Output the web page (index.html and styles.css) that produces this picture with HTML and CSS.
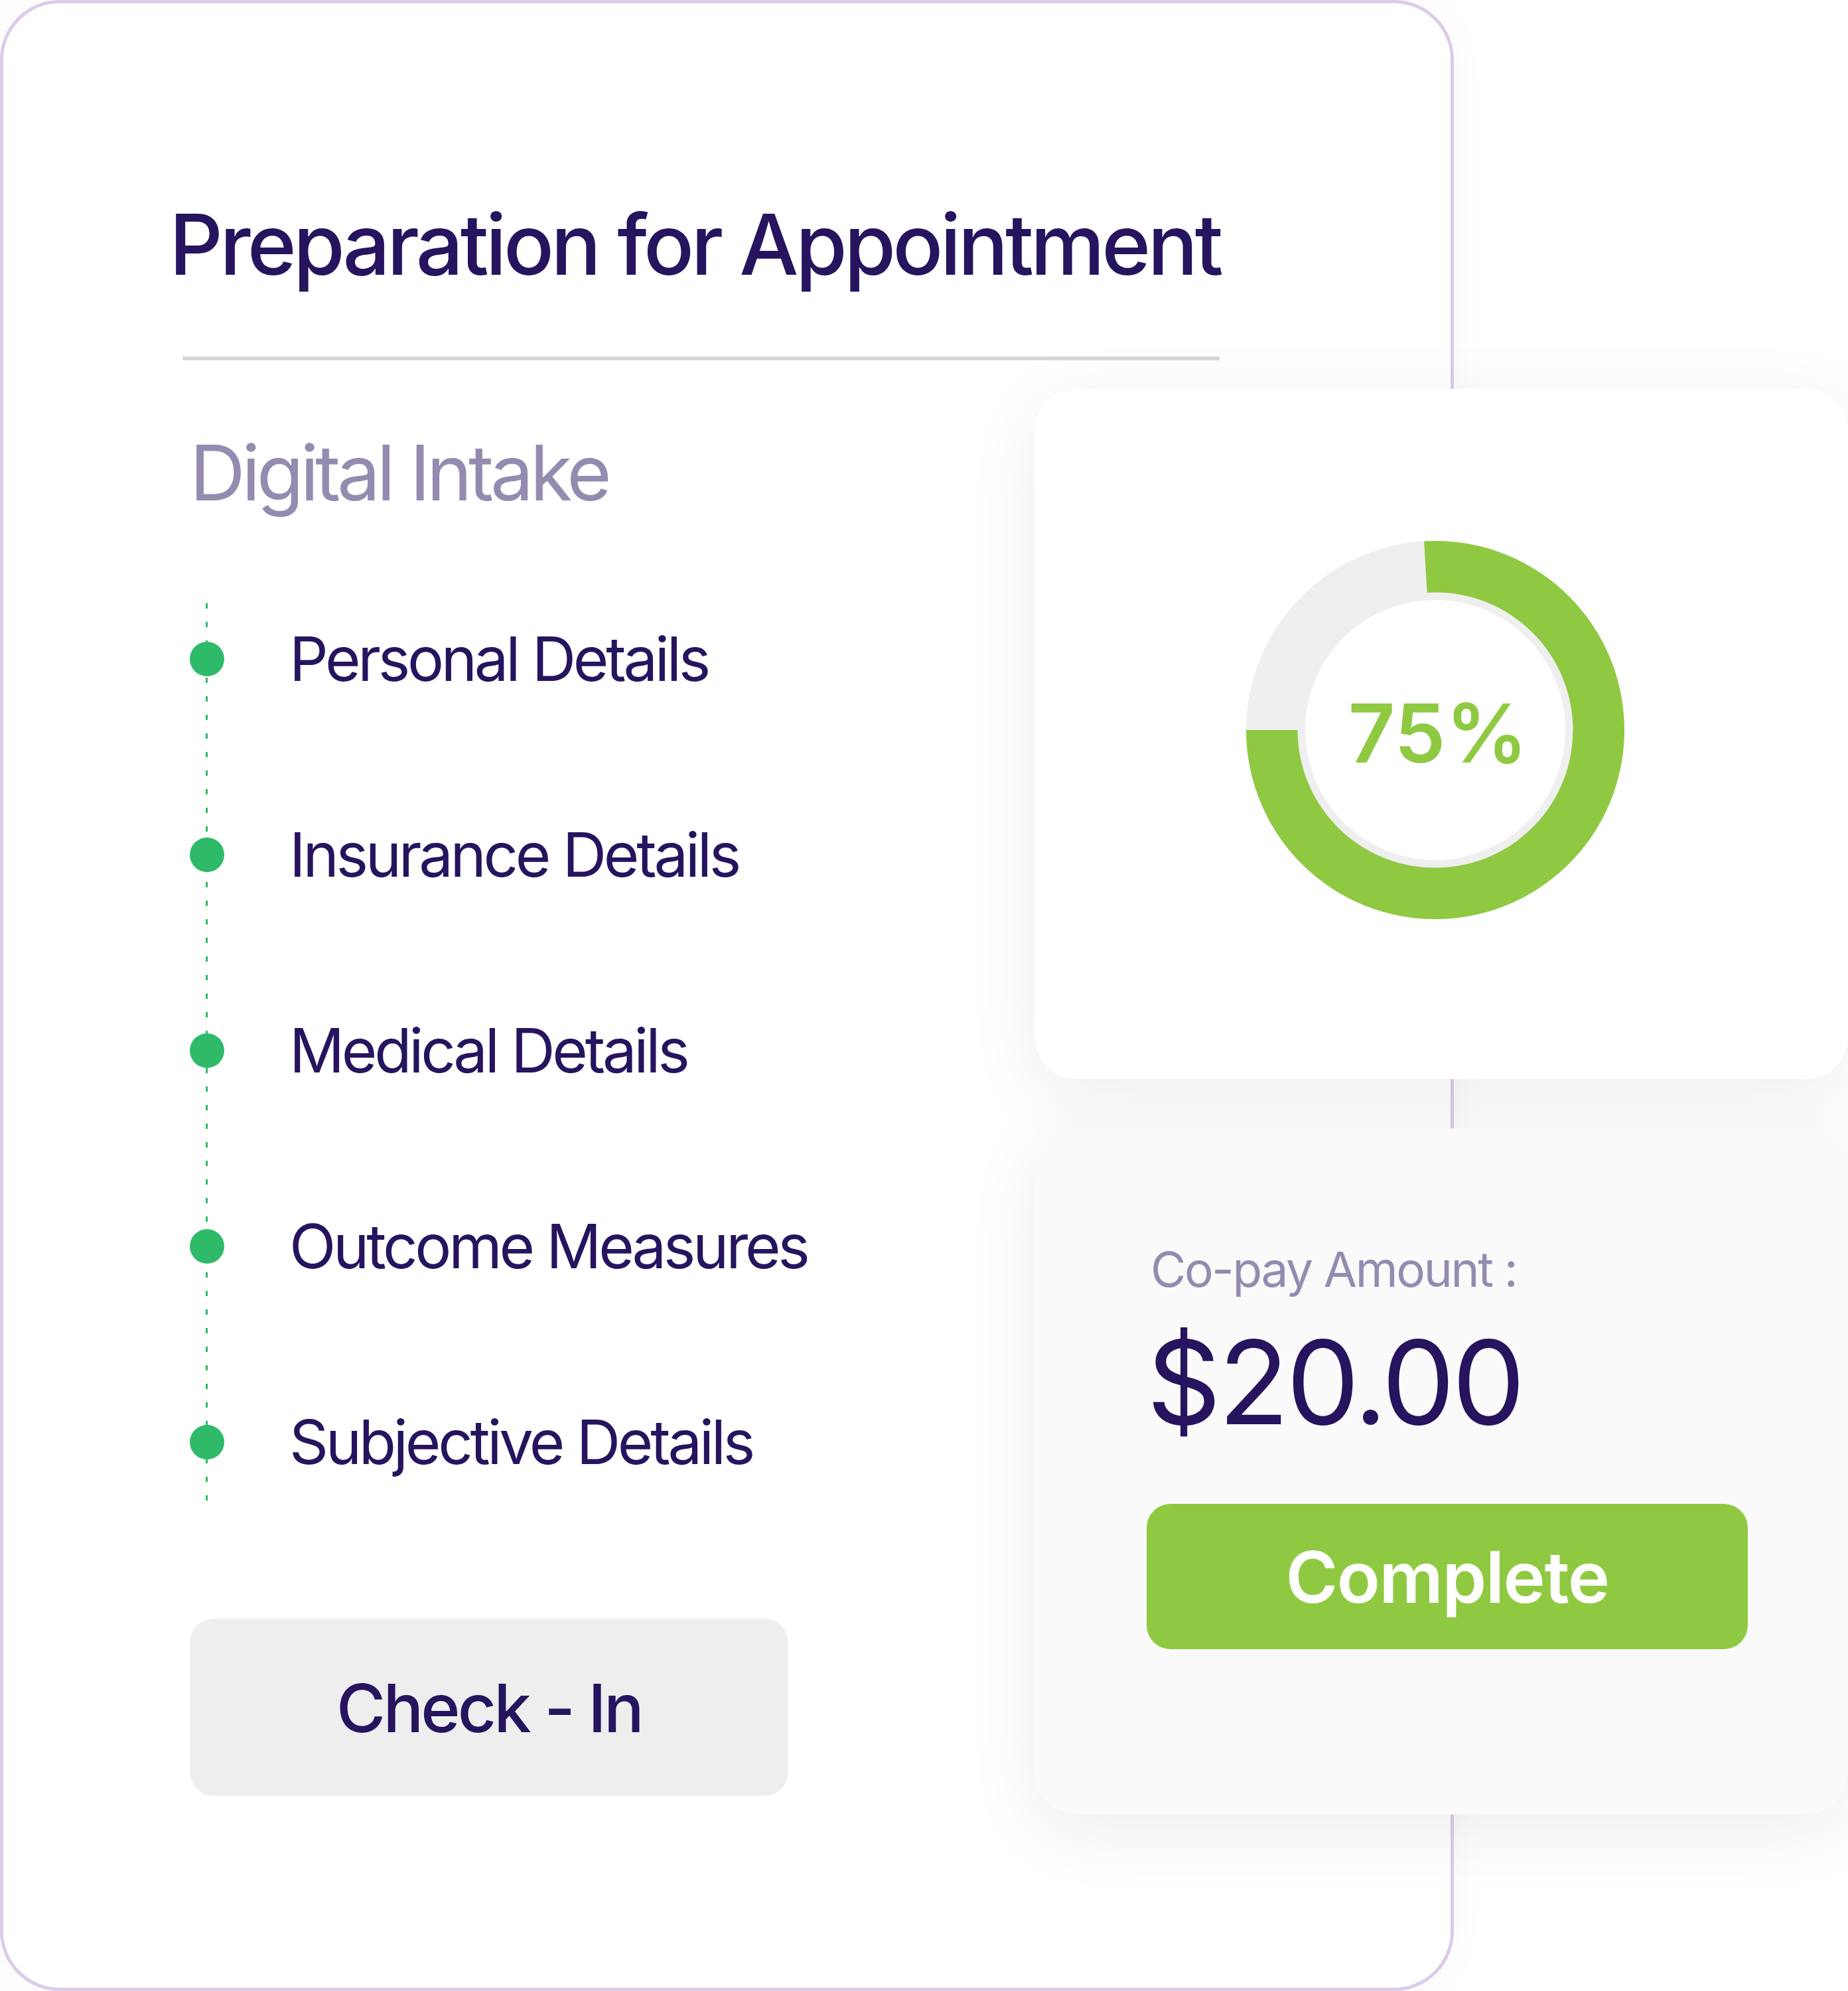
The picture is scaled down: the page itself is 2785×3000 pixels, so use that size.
FILE: index.html
```html
<!DOCTYPE html>
<html lang="en">
<head>
<meta charset="utf-8">
<title>Preparation for Appointment</title>
<link rel="stylesheet" href="styles.css">
</head>
<body>
<div class="stage">
  <section class="intake-card">
    <h1 class="title">Preparation for Appointment</h1>
    <hr class="divider">
    <h2 class="subtitle">Digital Intake</h2>
    <ul class="steps">
      <li class="step"><span class="dot"></span><span class="step-label">Personal Details</span></li>
      <li class="step"><span class="dot"></span><span class="step-label">Insurance Details</span></li>
      <li class="step"><span class="dot"></span><span class="step-label">Medical Details</span></li>
      <li class="step"><span class="dot"></span><span class="step-label">Outcome Measures</span></li>
      <li class="step"><span class="dot"></span><span class="step-label">Subjective Details</span></li>
    </ul>
    <button class="checkin">Check - In</button>
  </section>
  <aside class="side">
    <div class="progress-card">
      <div class="donut">
        <svg class="donut-svg" viewBox="0 0 570 570" width="570" height="570">
          <circle cx="285" cy="285" r="285" fill="#efefef"/>
          <path d="M 268.1 0.5 A 285 285 0 1 1 0 285 L 77.5 285 A 207.5 207.5 0 1 0 272.7 77.9 Z" fill="#8fc942"/>
          <circle cx="285" cy="285" r="196" fill="#ffffff"/>
        </svg>
        <span class="donut-value">75%</span>
      </div>
    </div>
    <div class="copay-card">
      <p class="copay-label">Co-pay Amount :</p>
      <p class="copay-amount">$20.00</p>
      <button class="complete">Complete</button>
    </div>
  </aside>
</div>
</body>
</html>
```
FILE: styles.css
```css
* { box-sizing: border-box; }

html, body {
  margin: 0;
  padding: 0;
  background: #ffffff;
  overflow: hidden;
}

body {
  font-family: Inter, "Noto Sans", "Liberation Sans", sans-serif;
  color: #26145f;
}

.stage {
  position: relative;
  width: 2785px;
  height: 3000px;
}

.intake-card {
  width: 2191px;
  height: 3000px;
  border: 5px solid #ddcbea;
  border-radius: 90px;
  background: #ffffff;
  padding: 300px 0 0 281px;
  box-shadow: 0 0 60px rgba(0, 0, 0, 0.035);
  display: flex;
  flex-direction: column;
  align-items: flex-start;
}

.title {
  margin: 0 0 0 -31px;
  font-size: 126px;
  line-height: 126px;
  font-weight: 500;
  color: #26145f;
  letter-spacing: -4.7px;
  white-space: nowrap;
}

.divider {
  margin: 106px 0 0 -11px;
  width: 1563px;
  height: 6px;
  border: 0;
  background: #d8d8d8;
}

.subtitle {
  margin: 111px 0 0 0;
  font-size: 116px;
  line-height: 116px;
  font-weight: 400;
  color: #958bb0;
  letter-spacing: -5.5px;
}

.steps {
  position: relative;
  list-style: none;
  margin: 75px 0 0 0;
  padding: 0;
}

.steps::before {
  content: "";
  position: absolute;
  left: 24px;
  top: 64px;
  bottom: 57px;
  width: 3px;
  background-image: linear-gradient(to bottom, #2eba69 0 8px, transparent 8px 28px);
  background-size: 3px 28px;
  background-repeat: repeat-y;
}

.step {
  position: relative;
  height: 295px;
  display: flex;
  align-items: center;
}

.dot {
  width: 52px;
  height: 52px;
  border-radius: 50%;
  background: #2eba69;
  flex: none;
}

.step-label {
  margin-left: 98px;
  font-size: 92px;
  line-height: 92px;
  font-weight: 400;
  color: #26145f;
  letter-spacing: -4.3px;
  white-space: nowrap;
}

.checkin {
  margin-top: 119px;
  width: 902px;
  height: 267px;
  border: 0;
  border-radius: 36px;
  background: #eeeeee;
  font-family: inherit;
  font-size: 101px;
  font-weight: 500;
  letter-spacing: -3.8px;
  color: #26145f;
  padding: 0;
}

.side {
  position: absolute;
  left: 1559px;
  top: 586px;
  width: 1226px;
  display: flex;
  flex-direction: column;
  gap: 74px;
}

.progress-card {
  height: 1040px;
  border-radius: 64px;
  background: #ffffff;
  box-shadow: 0 24px 110px rgba(0, 0, 0, 0.075);
  display: flex;
  align-items: center;
  justify-content: center;
  padding: 0 18px 12px 0;
}

.donut {
  display: grid;
  place-items: center;
  width: 570px;
  height: 570px;
}

.donut-svg,
.donut-value {
  grid-area: 1 / 1;
}

.donut-svg { display: block; }

.donut-value {
  font-size: 123px;
  line-height: 123px;
  font-weight: 600;
  color: #8fc942;
  margin-top: 8px;
  margin-left: 8px;
}

.copay-card {
  height: 1034px;
  border-radius: 64px;
  background: #fafafa;
  box-shadow: 0 24px 110px rgba(0, 0, 0, 0.075);
  padding: 176px 0 0 169px;
  display: flex;
  flex-direction: column;
  align-items: flex-start;
}

.copay-label {
  margin: 0 0 0 6px;
  font-size: 73px;
  line-height: 73px;
  font-weight: 400;
  color: #958bb0;
  letter-spacing: -2.4px;
}

.copay-amount {
  margin: 46px 0 0 0;
  font-size: 175px;
  line-height: 175px;
  font-weight: 400;
  color: #26145f;
  letter-spacing: -4.2px;
}

.complete {
  margin-top: 96px;
  width: 906px;
  height: 219px;
  border: 0;
  border-radius: 36px;
  background: #8fc942;
  color: #ffffff;
  font-family: inherit;
  font-size: 107px;
  font-weight: 600;
  letter-spacing: -1.4px;
  padding: 0;
}
```
